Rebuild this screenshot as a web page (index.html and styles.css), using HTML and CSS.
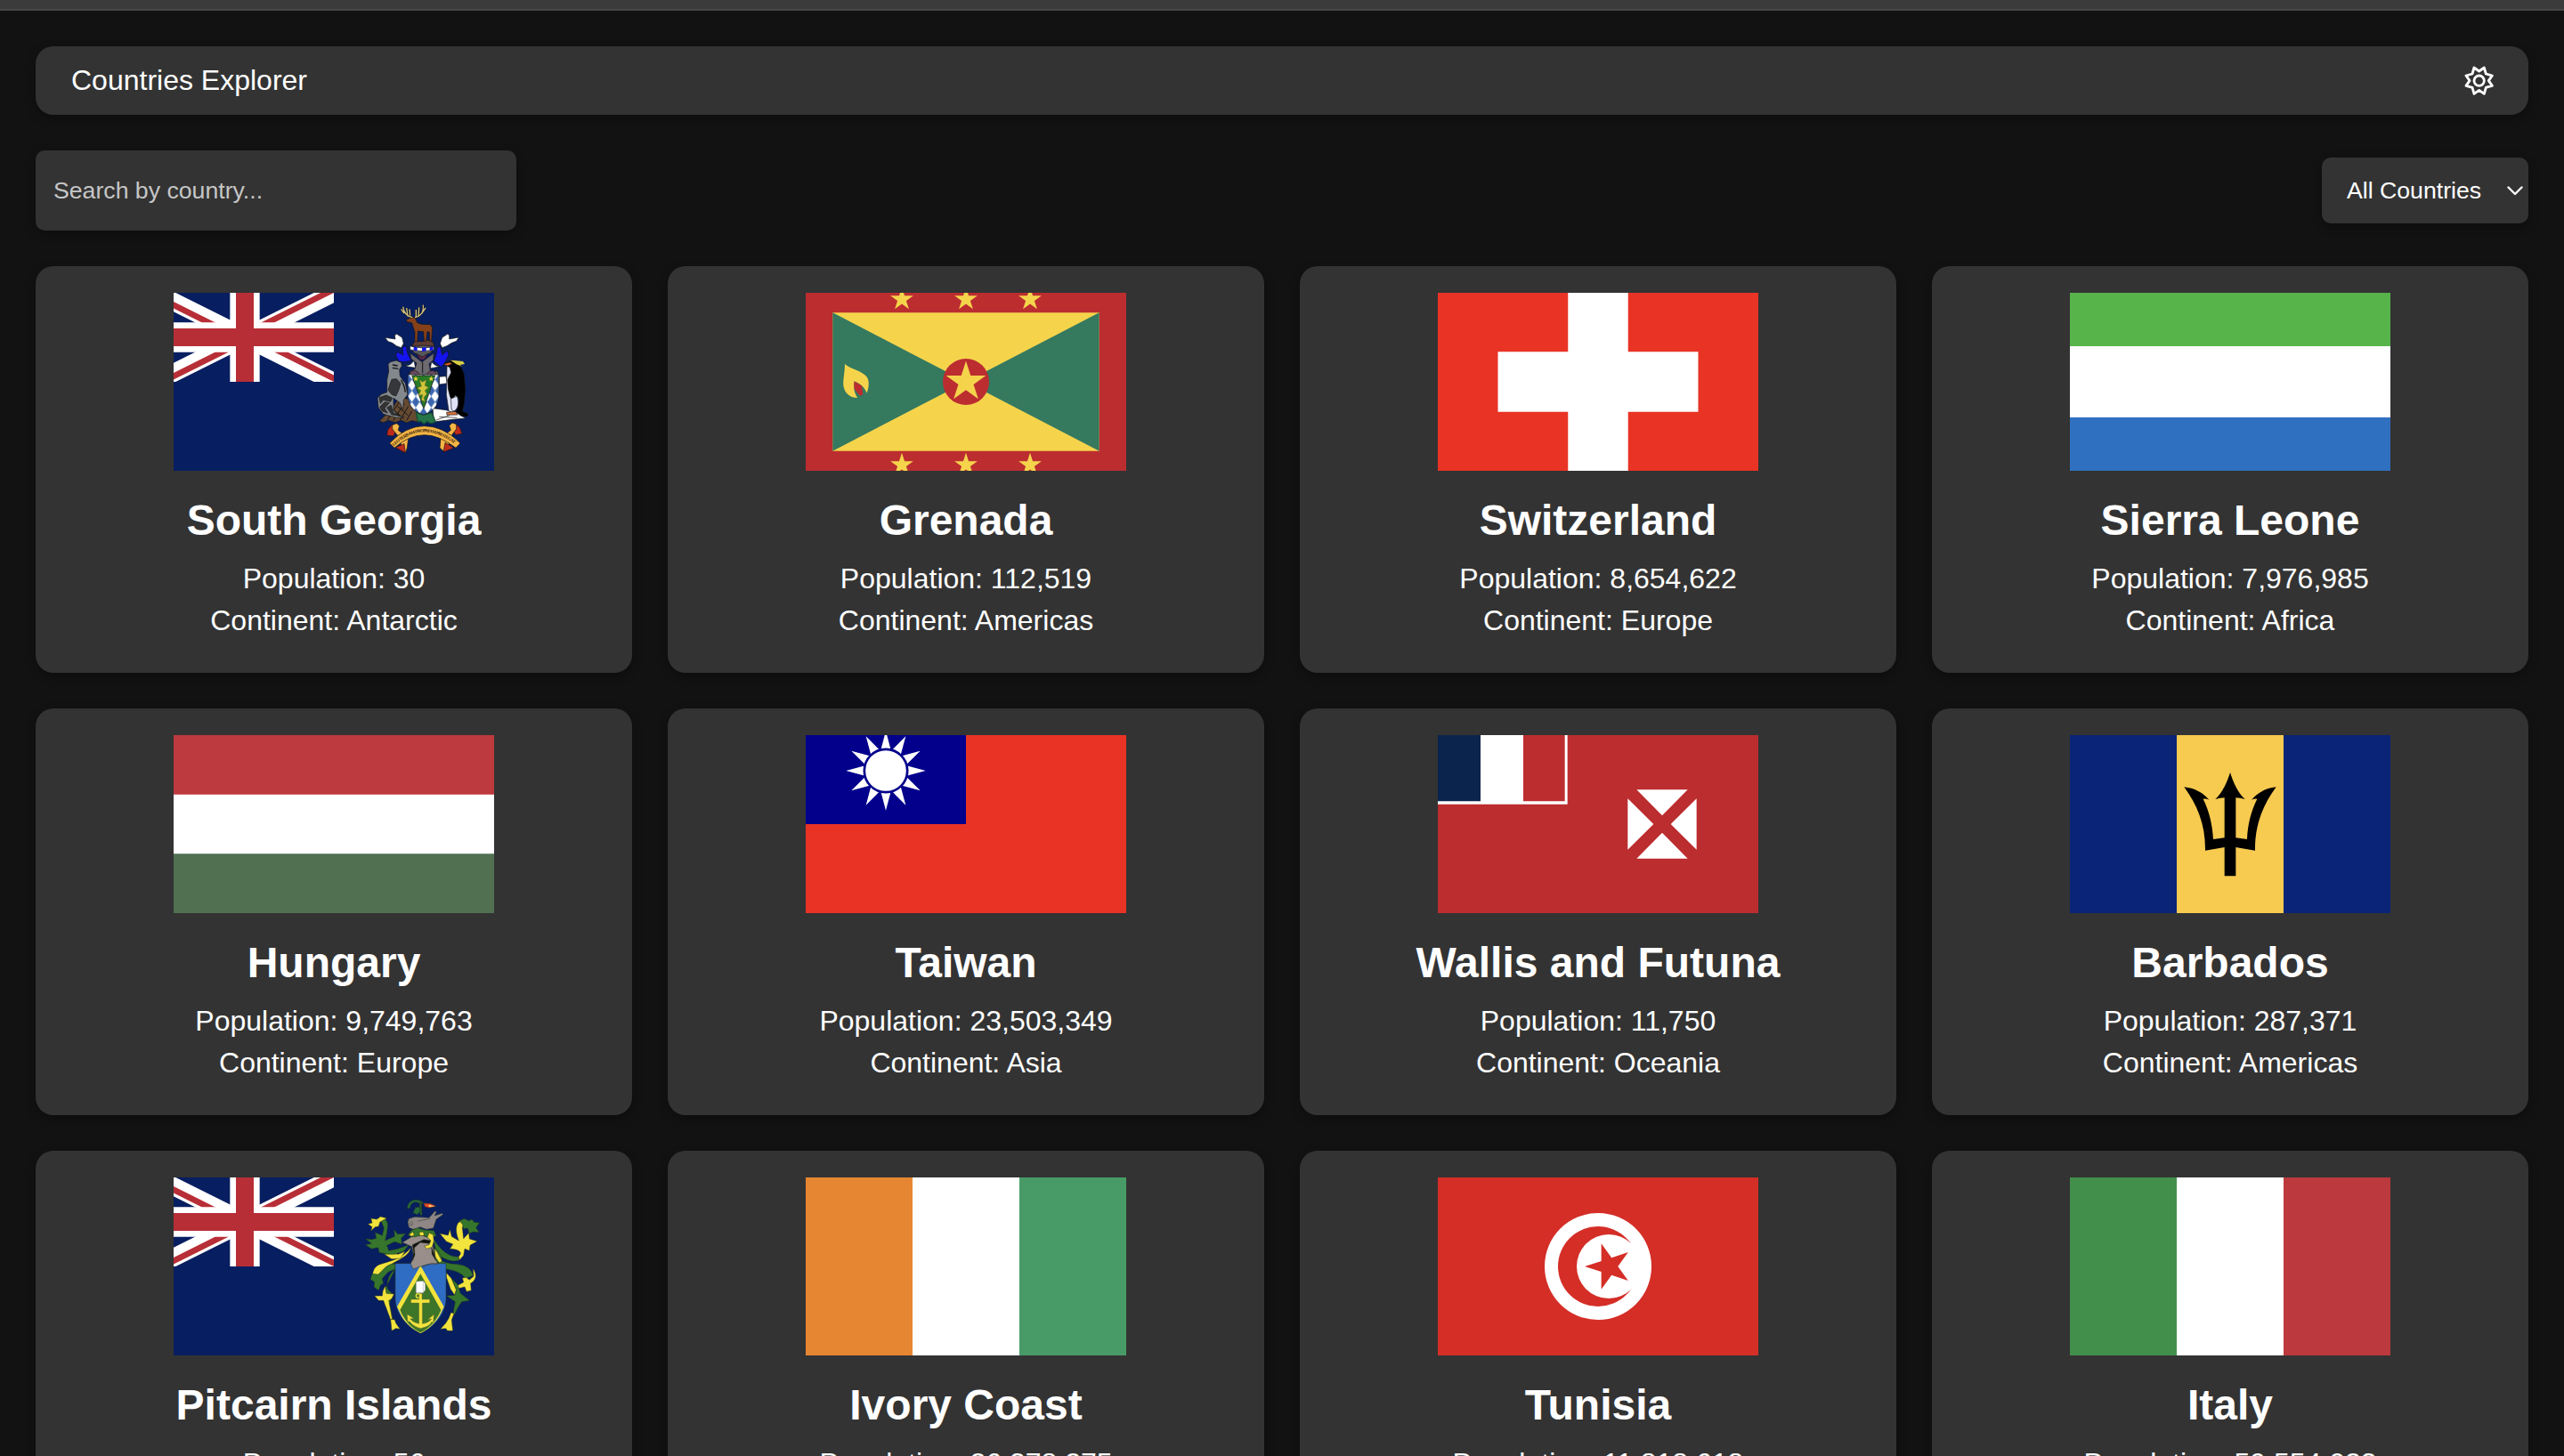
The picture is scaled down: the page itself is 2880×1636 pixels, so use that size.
FILE: index.html
```html
<!DOCTYPE html>
<html lang="en">
<head>
<meta charset="utf-8">
<title>Countries Explorer</title>
<link rel="stylesheet" href="styles.css">
</head>
<body>
<svg class="defs" width="0" height="0" aria-hidden="true">
  <defs>
    <clipPath id="jack-frame"><path d="M0,0h60v30h-60z"/></clipPath>
    <clipPath id="jack-saltire"><path d="M30,15h30v15zv15h-30zh-30v-15zv-15h30z"/></clipPath>
    <g id="jack" clip-path="url(#jack-frame)">
      <path d="M0,0h60v30h-60z" fill="#071e61"/>
      <path d="M0,0 60,30M60,0 0,30" stroke="#fff" stroke-width="6"/>
      <path d="M0,0 60,30M60,0 0,30" clip-path="url(#jack-saltire)" stroke="#b82e36" stroke-width="4"/>
      <path d="M30,0v30M0,15h60" stroke="#fff" stroke-width="10"/>
      <path d="M30,0v30M0,15h60" stroke="#b82e36" stroke-width="6"/>
    </g>
    <path id="star" d="M0,-100 22.5,-30.9H95.1L36.3,11.8 58.8,80.9 0,38.2-58.8,80.9-36.3,11.8-95.1,-30.9H-22.5Z"/>
    <path id="ray" d="M0,-134 17,-70H-17Z"/>
    <pattern id="lozenges" x="822" y="330" width="26" height="38" patternUnits="userSpaceOnUse">
      <path d="M0,0h26v38h-26z" fill="#fff"/>
      <path d="M13,0 26,19 13,38 0,19Z" fill="#3c66ae"/>
    </pattern>
  </defs>
</svg>

<div class="window-edge"></div>
<div class="page">
  <header class="header">
    <span>Countries Explorer</span>
    <svg class="gear" viewBox="742 217 100 100" fill="none" stroke="#fff" stroke-width="8.5" stroke-linejoin="round">
      <path d="M775,223 792,235 809,223 815,244 836,250 824,267 836,284 815,290 809,311 792,299 775,311 769,290 748,284 760,267 748,250 769,244Z"/>
      <circle cx="792" cy="267" r="17"/>
    </svg>
  </header>

  <div class="filters">
    <input class="search" type="text" placeholder="Search by country...">
    <button class="select" type="button">All Countries
      <svg class="chevron" viewBox="0 0 18 11" fill="none" stroke="#fff" stroke-width="2.4" stroke-linecap="round" stroke-linejoin="round"><path d="M1.5,1.5 9,9 16.5,1.5"/></svg>
    </button>
  </div>

  <main class="grid">
    <article class="card">
      <svg class="flag" viewBox="45 57 1080 600">
        <path d="M45,57h1080v600H45z" fill="#071e61"/>
        <use href="#jack" transform="translate(-15 57) scale(10)"/>
        <g stroke="#151515" stroke-width="2" stroke-linejoin="round">
          <!-- ground -->
          <path d="M738,490 760,468 785,440 805,410 838,415 866,462 868,492 848,488 830,495 812,487 790,494 770,487 752,494Z" fill="#664a32"/>
          <path d="M765,486 805,425M785,488 822,430M808,486 836,440M830,488 848,455M800,440 835,470M790,455 820,482" stroke-width="3"/>
          <path d="M918,446 962,452 1000,462 1028,480 985,484 922,492Z" fill="#fff"/>
          <path d="M940,475 1000,478M930,486 975,470" fill="none"/>
          <path d="M862,460 885,468 915,462 928,492 912,498 900,491 888,499 878,490 868,492Z" fill="#267548" stroke="#164e33" stroke-width="4"/>
          <!-- supporter: seal -->
          <path d="M768,298 775,290 795,285 812,292 814,304 806,316 808,338 826,362 834,400 820,418 818,452 808,428 786,412 786,452 800,470 822,476 795,478 752,466 735,444 732,412 746,398 764,392 764,350 770,322Z" fill="#83888c"/>
          <path d="M780,349 796,347 810,362 803,386 794,405 780,400 768,385 774,366Z" fill="#35373b"/>
          <path d="M738,410 762,402 782,412 776,424 752,418 742,430ZM740,442 756,425 772,428 756,446 766,462 748,456ZM764,444 778,436 786,462 808,472 780,468Z" fill="#333"/>
          <path d="M783,300 800,303M782,310 802,313M812,350 822,372 826,392" fill="none" stroke-width="4"/>
          <!-- supporter: penguin -->
          <path d="M940,340 962,338 968,362 940,366Z" fill="#fff"/>
          <path d="M966,304 976,296 986,312 1000,400 1004,440 986,462 972,455 964,400Z" fill="#dfe3f8"/>
          <path d="M952,297 968,290 984,284 1004,290 1014,308 1024,332 1028,385 1024,430 1018,456 1038,466 1034,474 1014,472 998,458 1004,440 1007,415 994,402 984,420 977,408 970,380 968,350 980,326 976,308 966,304Z" fill="#000"/>
          <path d="M978,415C984,430 976,445 986,456C1004,455 1008,425 1000,405Z" fill="#dfe3f8"/>
          <path d="M952,298 976,291 984,297 968,303Z" fill="#d95c28"/>
          <path d="M978,284 1020,288 1026,297 1010,300 1018,306 998,298Z" fill="#d8cd42" stroke="none"/>
          <path d="M965,460 995,457 1002,468 966,469Z" fill="#d47440"/>
          <!-- mantling -->
          <path d="M757,208 792,213 790,200 797,196 815,208 820,228 812,242 796,236 782,226 768,221Z" fill="#fff"/>
          <path d="M1006,207 974,213 974,200 968,196 950,208 943,228 950,242 966,236 982,226 998,220Z" fill="#fff"/>
          <path d="M816,240 828,236 834,262 846,286 822,290 804,288 794,268 798,256 818,266Z" fill="#1414ee"/>
          <path d="M944,240 934,240 930,264 922,286 946,308 962,288 972,266 968,252 950,266Z" fill="#1414ee"/>
          <path d="M822,300C840,306 848,294 855,286L860,310 835,306ZM944,304C926,306 920,294 914,290L910,312 930,308Z" fill="#fff"/>
          <!-- helmet -->
          <path d="M842,260 882,290 922,260 920,284 906,296 910,320 934,322 938,334H838L842,322 858,314 864,294 846,280Z" fill="#6d6a70"/>
          <path d="M850,238 884,222 918,238 914,258 884,274 852,258Z" fill="#56565a"/>
          <path d="M862,262 882,274 902,262 890,282H876Z" fill="#652b52"/>
          <path d="M884,290V328" stroke-width="3"/>
          <path d="M842,330C846,312 872,320 872,332M930,330C926,312 902,320 898,332" fill="#6b4a60"/>
          <path d="M842,236Q882,248 922,238V250Q882,258 842,249Z" fill="#fff"/>
          <path d="M854,239 866,241V253L854,251ZM882,242 896,241V253L882,254ZM908,240 920,238V250L908,252Z" fill="#1414ee" stroke="none"/>
          <path d="M848,238 858,218 880,222 900,216 918,222 924,238Q884,230 848,238Z" fill="#5f3c34"/>
          <!-- stag crest -->
          <path d="M829,148 846,140 858,140 866,158 880,163 910,164 917,174 914,220H908L907,190 900,188 896,220H889L887,188 868,186 866,222H858L858,190 852,172 848,158 832,155Z" fill="#85401a"/>
          <path d="M850,140C828,136 820,120 818,104M822,126 812,112M834,136 830,108M842,134 840,112M858,140C880,136 888,118 886,98M880,128 894,108M870,136 872,106M862,138 862,114" fill="none" stroke="#151515" stroke-width="7"/>
          <path d="M850,140C828,136 820,120 818,104M822,126 812,112M834,136 830,108M842,134 840,112M858,140C880,136 888,118 886,98M880,128 894,108M870,136 872,106M862,138 862,114" fill="none" stroke="#d6c588" stroke-width="4"/>
          <!-- shield -->
          <path d="M834,333H939V405C938,440 915,460 887,468C858,460 836,440 834,405Z" fill="url(#lozenges)"/>
          <path d="M848,336H926L888,448Z" fill="#287a26"/>
          <path d="M874,350 884,358 896,350 892,370 904,376 892,386 898,398 888,410 892,424 880,418 884,400 870,404 878,386 866,378 880,372Z" fill="#d3c639" stroke="#71712b"/>
          <g fill="#f0dc3f" stroke="none"><use href="#star" transform="translate(861 347) scale(.1)"/><use href="#star" transform="translate(913 347) scale(.1)"/></g>
          <!-- motto ribbon -->
          <path d="M782,500 766,520 764,538 786,540 796,520ZM994,498 1010,512 1017,532 996,536 984,518Z" fill="#bd2b1d"/>
          <path d="M782,503 796,497 806,505 802,520 836,548 832,580 826,597 812,575 808,548 782,516ZM998,500 984,495 974,505 979,520 945,548 942,580 956,592 972,572 974,548 998,516Z" fill="#f4b545"/>
          <path d="M792,578 822,566 826,597ZM960,562 990,580 954,594Z" fill="#bd2b1d"/>
          <path d="M773,564Q828,506 890,506Q954,506 1011,564L996,580Q940,536 890,536Q838,536 789,580Z" fill="#f4b545"/>
        </g>
        <path id="motto-line" d="M787,574Q838,526 890,526Q942,526 1002,574" fill="none"/>
        <text class="motto"><textPath href="#motto-line" textLength="226">LEO TERRAM PROPRIAM PROTEGAT</textPath></text>
      </svg>
      <h2>South Georgia</h2>
      <p>Population: 30</p>
      <p>Continent: Antarctic</p>
    </article>

    <article class="card">
      <svg class="flag" viewBox="45 57 1080 600">
        <path d="M45,57h1080v600H45z" fill="#bc2d30"/>
        <path d="M136,124h898v466H136z" fill="#f5d44c"/>
        <path d="M136,124 585,357 136,590ZM1034,124 585,357 1034,590Z" fill="#35795f"/>
        <circle cx="585" cy="357" r="78" fill="#bc2d30"/>
        <g fill="#f5d44c">
          <use href="#star" transform="translate(585 357.500) scale(.705)"/>
          <use href="#star" transform="translate(369 79) scale(.405)"/>
          <use href="#star" transform="translate(585 79) scale(.405)"/>
          <use href="#star" transform="translate(801 79) scale(.405)"/>
          <use href="#star" transform="translate(369 637) scale(.405)"/>
          <use href="#star" transform="translate(585 637) scale(.405)"/>
          <use href="#star" transform="translate(801 637) scale(.405)"/>
        </g>
        <path d="M208,355 234,370 238,400 228,404 208,380Z" fill="#bc2d30"/>
        <path d="M177,297C195,315 235,318 252,342C261,357 257,380 251,395C243,375 228,362 208,355C206,378 208,395 220,411C196,411 178,397 173,375C169,352 177,328 177,297Z" fill="#f5d44c"/>
      </svg>
      <h2>Grenada</h2>
      <p>Population: 112,519</p>
      <p>Continent: Americas</p>
    </article>

    <article class="card">
      <svg class="flag" viewBox="0 0 360 200">
        <path d="M0,0h360v200H0z" fill="#e83325"/>
        <path d="M146.250,0h67.500v200h-67.500zM67.500,66.250h225v67.500h-225z" fill="#fff"/>
      </svg>
      <h2>Switzerland</h2>
      <p>Population: 8,654,622</p>
      <p>Continent: Europe</p>
    </article>

    <article class="card">
      <svg class="flag" viewBox="0 0 360 200">
        <path d="M0,0h360v200H0z" fill="#fff"/>
        <path d="M0,0h360v60H0z" fill="#57b44b"/>
        <path d="M0,140h360v60H0z" fill="#3070c0"/>
      </svg>
      <h2>Sierra Leone</h2>
      <p>Population: 7,976,985</p>
      <p>Continent: Africa</p>
    </article>

    <article class="card">
      <svg class="flag" viewBox="0 0 360 200">
        <path d="M0,0h360v200H0z" fill="#fff"/>
        <path d="M0,0h360v66.670H0z" fill="#bd3a3e"/>
        <path d="M0,133.330h360v66.670H0z" fill="#517052"/>
      </svg>
      <h2>Hungary</h2>
      <p>Population: 9,749,763</p>
      <p>Continent: Europe</p>
    </article>

    <article class="card">
      <svg class="flag" viewBox="45 48 1080 600">
        <path d="M45,48h1080v600H45z" fill="#e83325"/>
        <path d="M45,48h540v300H45z" fill="#03008c"/>
        <g transform="translate(315 168)" fill="#fff">
          <use href="#ray"/><use href="#ray" transform="rotate(30)"/><use href="#ray" transform="rotate(60)"/>
          <use href="#ray" transform="rotate(90)"/><use href="#ray" transform="rotate(120)"/><use href="#ray" transform="rotate(150)"/>
          <use href="#ray" transform="rotate(180)"/><use href="#ray" transform="rotate(210)"/><use href="#ray" transform="rotate(240)"/>
          <use href="#ray" transform="rotate(270)"/><use href="#ray" transform="rotate(300)"/><use href="#ray" transform="rotate(330)"/>
          <circle r="72.500" stroke="#03008c" stroke-width="8"/>
        </g>
      </svg>
      <h2>Taiwan</h2>
      <p>Population: 23,503,349</p>
      <p>Continent: Asia</p>
    </article>

    <article class="card">
      <svg class="flag" viewBox="45 48 1080 600">
        <path d="M45,48h1080v600H45z" fill="#bc2d30"/>
        <path d="M45,48h437v233H45z" fill="#fff"/>
        <path d="M45,48h144v223H45z" fill="#0b244e"/>
        <path d="M333,48h140v223H333z" fill="#bc2d30"/>
        <path d="M715,232H887L801,319ZM715,464H887L801,377ZM685,262V434L772,348ZM917,262V434L830,348Z" fill="#fff"/>
      </svg>
      <h2>Wallis and Futuna</h2>
      <p>Population: 11,750</p>
      <p>Continent: Oceania</p>
    </article>

    <article class="card">
      <svg class="flag" viewBox="45 48 1080 600">
        <path d="M45,48h1080v600H45z" fill="#0a2477"/>
        <path d="M405,48h360v600H405z" fill="#f7ca50"/>
        <path d="M585,174C597,210 610,240 635,264Q620,259 604,259V394L642,399C644,350 655,305 676,263Q666,262 657,266C680,240 705,227 740,223C695,285 668,350 669,437L604,426V523H566V426L501,437C502,350 475,285 430,223C465,227 490,240 514,266Q505,262 494,263C515,305 525,350 528,399L566,394V259Q550,259 535,264C560,240 573,210 585,174Z" fill="#000"/>
      </svg>
      <h2>Barbados</h2>
      <p>Population: 287,371</p>
      <p>Continent: Americas</p>
    </article>

    <article class="card">
      <svg class="flag" viewBox="-585 9 1080 600">
        <path d="M-585,9H495v600H-585z" fill="#071e61"/>
        <use href="#jack" transform="translate(-645 9) scale(10)"/>
        <g stroke="#27351f" stroke-width="1.500" stroke-linejoin="round">
          <!-- mantling, left -->
          <path d="M215,245C205,285 150,290 130,318C115,342 98,345 86,345C84,325 92,308 110,302C150,290 185,282 215,245Z" fill="#f3e33d"/>
          <path d="M125,268 150,264 172,268 195,258 180,282 150,284Z" fill="#f3e33d"/>
          <path d="M110,150 128,146 137,165 134,195 128,222 160,208 158,185 170,200 197,198 182,214 184,234 160,226 134,238 140,256 170,250 208,236 190,258 160,268 135,268 108,262 104,245 82,250 62,236 82,232 62,216 84,218 98,214 94,195 108,200 118,205 124,180 116,160Z" fill="#35762c"/>
          <path d="M133,146 112,141 100,150 80,147 84,162 70,166 84,176 80,190 94,176 106,174 110,160Z" fill="#f3e33d"/>
          <path d="M162,300C130,300 122,322 104,336L84,334 78,352 92,362 90,378 106,390 112,372 122,366 118,350 138,328 162,318Z" fill="#35762c"/>
          <path d="M162,318C140,335 132,360 136,385L155,405 146,424 140,440 150,488H154L144,440 126,440 130,380Z" fill="#35762c"/>
          <path d="M128,374 132,400 158,402 150,418 140,424 152,488H146L122,424 106,424 92,408 118,408 120,392Z" fill="#f3e33d"/>
          <path d="M146,488H160L164,500 178,520 164,518 150,526 148,505Z" fill="#f3e33d"/>
          <!-- mantling, right -->
          <path d="M290,215C320,262 350,280 378,275L376,288C350,298 316,280 300,262Z" fill="#35762c"/>
          <path d="M376,275C392,260 372,250 346,250L356,234 334,225 312,198 340,204 346,184 352,208 376,222C362,190 366,160 384,156L400,156 388,178 392,215 410,196 412,216 438,224 414,238 412,256 396,250 392,272 378,288Z" fill="#f3e33d"/>
          <path d="M378,156 394,148 410,155 420,150 428,160 446,162 434,178 444,194 424,192 412,198 406,180 392,182 388,166Z" fill="#35762c"/>
          <path d="M296,245 316,270 320,292 350,300C380,302 416,305 424,340L398,350C385,325 350,322 326,316L300,290Z" fill="#35762c"/>
          <path d="M294,248 304,262 320,292 310,296 296,276Z" fill="#f3e33d"/>
          <path d="M424,316C438,335 436,356 416,366L418,390 402,394 396,378 372,384 370,374 392,362 388,348 400,346 412,354 426,342Z" fill="#f3e33d"/>
          <path d="M334,330 352,350 368,388 362,406 348,385 334,345Z" fill="#f3e33d"/>
          <path d="M352,350 372,370 382,400 412,424 386,428 374,446 362,470 356,470 364,428 334,408 362,406 368,388Z" fill="#35762c"/>
          <path d="M350,464 360,468 352,490 356,526 338,526 332,518 314,520 332,500 342,484Z" fill="#f3e33d"/>
          <!-- shield -->
          <path d="M162,299H333V420C330,480 280,520 247,534C214,520 165,480 162,420Z" fill="#2f6dc4"/>
          <path d="M247,306 326,445 316,466C300,500 270,524 247,534C222,522 192,500 178,466L168,445Z" fill="#f3e33d" stroke="none"/>
          <path d="M247,334 316,456C300,496 270,522 247,532C224,522 194,496 178,456Z" fill="#3d7529" stroke="none"/>
          <path d="M232,360 256,358 263,366V388L256,398H232Z" fill="#fff" stroke="#888"/>
          <path d="M256,360V397" stroke="#999"/>
          <circle cx="239" cy="408" r="7" fill="none" stroke="#f3e33d" stroke-width="4"/>
          <path d="M242,400H252V420H278V432H253V502C270,500 280,492 284,486L272,488 292,471 290,500 285,496C278,510 262,514 248,518C232,514 218,506 210,494L204,496 202,470 224,484 212,486C222,496 232,500 242,502V432H215V420H242Z" fill="#f3e33d" stroke="#75752c"/>
          <!-- helmet -->
          <path d="M186,228 222,206 250,204 282,214 290,245 300,290 306,300 270,302 250,308 222,318 214,300 224,276 218,242Z" fill="#998e8a"/>
          <path d="M220,236 258,218 282,222 276,232 246,228 226,246 228,270 220,290 224,260Z" fill="#111"/>
          <path d="M284,244 294,270 298,288 286,268Z" fill="#111"/>
          <path d="M250,312 284,298 304,300" fill="none"/>
          <path d="M204,204 216,188 236,178 260,186 292,188 300,206 282,212 250,204 226,210Z" fill="#35762c"/>
          <path d="M210,200 222,192 226,204 214,208ZM242,194 256,192 260,204 246,206ZM276,196 290,202 292,224 286,244 268,250 260,240 276,236 282,222 270,210Z" fill="#f3e33d"/>
          <!-- bowl and branch -->
          <path d="M208,148 228,142 276,145 296,122 301,126 294,138 320,130 323,134 300,150 290,180 266,184 246,176 222,184 208,178 204,160Z" fill="#8f8786"/>
          <path d="M214,154C232,172 206,178 212,160M238,156 280,148" fill="none"/>
          <path d="M203,114C202,90 226,78 246,88L260,96 246,98C230,86 212,95 212,112ZM222,128 230,110 248,108 246,124 236,134ZM244,98 250,86 252,136 246,136Z" fill="#286b37"/>
          <path d="M258,96 280,97 300,106 278,112 262,108Z" fill="#e84724"/>
          <path d="M274,101 296,106 276,108Z" fill="#f6df87" stroke="none"/>
        </g>
      </svg>
      <h2>Pitcairn Islands</h2>
      <p>Population: 56</p>
      <p>Continent: Oceania</p>
    </article>

    <article class="card">
      <svg class="flag" viewBox="0 0 360 200">
        <path d="M0,0h360v200H0z" fill="#fff"/>
        <path d="M0,0h120v200H0z" fill="#e78632"/>
        <path d="M240,0h120v200H240z" fill="#489b67"/>
      </svg>
      <h2>Ivory Coast</h2>
      <p>Population: 26,378,275</p>
      <p>Continent: Africa</p>
    </article>

    <article class="card">
      <svg class="flag" viewBox="45 39 1080 600">
        <path d="M45,39h1080v600H45z" fill="#d42e27"/>
        <circle cx="585" cy="339" r="180" fill="#fff"/>
        <circle cx="585" cy="339" r="135" fill="#d42e27"/>
        <circle cx="621" cy="339" r="108" fill="#fff"/>
        <use href="#star" transform="translate(621 339) rotate(-90) scale(.81)" fill="#d42e27"/>
      </svg>
      <h2>Tunisia</h2>
      <p>Population: 11,818,618</p>
      <p>Continent: Africa</p>
    </article>

    <article class="card">
      <svg class="flag" viewBox="0 0 360 200">
        <path d="M0,0h360v200H0z" fill="#fff"/>
        <path d="M0,0h120v200H0z" fill="#428f4c"/>
        <path d="M240,0h120v200H240z" fill="#bc393d"/>
      </svg>
      <h2>Italy</h2>
      <p>Population: 59,554,023</p>
      <p>Continent: Europe</p>
    </article>
  </main>
</div>
</body>
</html>
```

FILE: styles.css
```css
* {
  box-sizing: border-box;
}

html,
body {
  height: 100%;
  overflow: hidden;
}

body {
  margin: 0;
  background: #121212;
  color: #fff;
  font: 32px/37px "Liberation Sans", Arial, sans-serif;
}

.defs {
  display: block;
}

.window-edge {
  height: 12px;
  background: #3b3b3b;
  border-bottom: 2px solid #484848;
}

.page {
  padding: 40px;
}

.header,
.search,
.select,
.card {
  background: #333;
  box-shadow: 0 4px 12px rgba(0, 0, 0, 0.3);
}

.header {
  display: flex;
  align-items: center;
  justify-content: space-between;
  height: 77px;
  padding: 0 39px 0 40px;
  border-radius: 20px;
}

.gear {
  width: 33.333px;
  height: 33.333px;
}

.filters {
  display: flex;
  align-items: center;
  justify-content: space-between;
  margin: 40px 0;
}

.search,
.select {
  border: 0;
  border-radius: 10px;
  color: #fff;
  font: 26.667px "Liberation Sans", Arial, sans-serif;
}

.search {
  width: 540px;
  height: 90px;
  padding: 0 20px;
}

.search::placeholder {
  color: #c6c6c6;
  opacity: 1;
}

.select {
  display: flex;
  align-items: center;
  justify-content: space-between;
  width: 232px;
  height: 74px;
  padding: 0 6px 0 28px;
}

.chevron {
  width: 18px;
  height: 11px;
}

.grid {
  display: grid;
  grid-template-columns: repeat(4, 1fr);
  gap: 40px;
}

.card {
  display: flex;
  flex-direction: column;
  align-items: center;
  height: 457px;
  padding-top: 30px;
  border-radius: 20px;
}

.flag {
  display: block;
  width: 360px;
  height: 200px;
}

.card h2 {
  margin: 28px 0 19px;
  font-size: 48px;
  line-height: 56px;
}

.card p {
  margin: 0 0 10px;
}

.motto {
  fill: #33200d;
  font: bold 15px "Liberation Serif", serif;
}
```
